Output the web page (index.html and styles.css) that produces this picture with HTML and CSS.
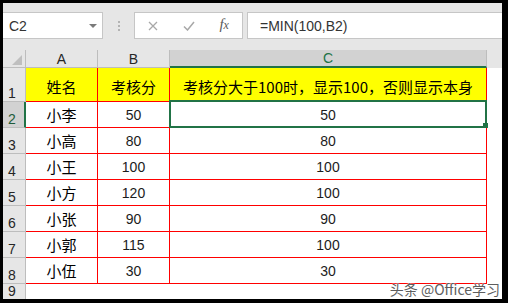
FILE: index.html
```html
<!DOCTYPE html>
<html lang="zh">
<head>
<meta charset="utf-8">
<link rel="stylesheet" href="styles.css">
</head>
<body>
<div class="frame">
  <div class="toolbar">
    <div class="namebox"><span>C2</span><span class="caret"></span></div>
    <div class="dots"><span></span><span></span><span></span></div>
    <div class="fxbox">
      <div class="ico"><svg width="10" height="10" viewBox="0 0 10 10"><path d="M1 1 L9 9 M9 1 L1 9" stroke="#a8a8a8" stroke-width="1.3" fill="none"/></svg></div>
      <div class="ico"><svg width="12" height="10" viewBox="0 0 12 10"><path d="M1 5.5 L4.5 9 L11 1" stroke="#a8a8a8" stroke-width="1.5" fill="none"/></svg></div>
      <div class="ico fx">f<span>x</span></div>
    </div>
    <div class="formula">=MIN(100,B2)</div>
  </div>
  <div class="sheet">
    <div class="corner"><span class="tri"></span></div>
    <div class="ch">A</div>
    <div class="ch">B</div>
    <div class="ch sel">C</div>
    <div class="ch blank"></div>

    <div class="rh">1</div>
    <div class="c y cjk">姓名</div>
    <div class="c y cjk">考核分</div>
    <div class="c y cjk">考核分大于100时，显示100，否则显示本身</div>
    <div class="e"></div>

    <div class="rh sel">2</div>
    <div class="c cjk">小李</div>
    <div class="c num">50</div>
    <div class="c num active">50<span class="box"></span><span class="handle"></span></div>
    <div class="e"></div>

    <div class="rh">3</div>
    <div class="c cjk">小高</div>
    <div class="c num">80</div>
    <div class="c num">80</div>
    <div class="e"></div>

    <div class="rh">4</div>
    <div class="c cjk">小王</div>
    <div class="c num">100</div>
    <div class="c num">100</div>
    <div class="e"></div>

    <div class="rh">5</div>
    <div class="c cjk">小方</div>
    <div class="c num">120</div>
    <div class="c num">100</div>
    <div class="e"></div>

    <div class="rh">6</div>
    <div class="c cjk">小张</div>
    <div class="c num">90</div>
    <div class="c num">90</div>
    <div class="e"></div>

    <div class="rh">7</div>
    <div class="c cjk">小郭</div>
    <div class="c num">115</div>
    <div class="c num">100</div>
    <div class="e"></div>

    <div class="rh">8</div>
    <div class="c cjk">小伍</div>
    <div class="c num">30</div>
    <div class="c num">30</div>
    <div class="e"></div>

    <div class="rh last">9</div>
    <div class="e wide"></div>
  </div>
  <div class="watermark">头条 @Office学习</div>
</div>
</body>
</html>
```

FILE: styles.css
```css
* { box-sizing: border-box; margin: 0; padding: 0; }
html, body { width: 508px; height: 303px; overflow: hidden; }
body { background: #000; }

.frame {
  position: relative;
  margin: 3px 6px 4px 3px;
  width: 499px;
  height: 296px;
  background: #fff;
  display: flex;
  flex-direction: column;
  font-family: "Liberation Sans", "Noto Sans CJK SC", sans-serif;
}

.toolbar {
  height: 47px;
  flex: none;
  background: #e6e6e6;
  display: flex;
  align-items: flex-start;
  padding-top: 9px;
}

.namebox {
  width: 100px;
  height: 27px;
  background: #fff;
  border: 1px solid #c6c6c6;
  border-left: none;
  display: flex;
  align-items: center;
  padding-left: 6px;
  font-size: 14px;
  color: #333;
}
.namebox .caret {
  margin-left: auto;
  margin-right: 5px;
  width: 0;
  height: 0;
  border-left: 4px solid transparent;
  border-right: 4px solid transparent;
  border-top: 4px solid #7a7a7a;
}

.dots {
  width: 31px;
  padding-top: 9px;
  display: flex;
  flex-direction: column;
  align-items: center;
  gap: 2px;
}
.dots span {
  width: 2px;
  height: 2px;
  background: #b3b3b3;
}

.fxbox {
  width: 109px;
  height: 27px;
  background: #fff;
  border: 1px solid #c6c6c6;
  display: flex;
}
.ico {
  width: 36px;
  display: flex;
  align-items: center;
  justify-content: center;
}
.ico.fx {
  font-family: "Liberation Serif", serif;
  font-style: italic;
  font-size: 15px;
  color: #5a5a5a;
  padding-bottom: 2px;
}
.ico.fx span {
  font-size: 12px;
  position: relative;
  top: 1px;
}

.formula {
  flex: 1;
  margin-left: 4px;
  height: 27px;
  background: #fff;
  border: 1px solid #c6c6c6;
  border-right: none;
  display: flex;
  align-items: center;
  padding-left: 12px;
  font-size: 14px;
  color: #333;
}

.sheet {
  display: grid;
  grid-template-columns: 23px 72px 72px 317px 15px;
  grid-template-rows: 18px 34px repeat(7, 26px) 15px;
}

.corner {
  background: #e6e6e6;
  border-right: 1px solid #bdbdbd;
  border-bottom: 1px solid #bdbdbd;
  position: relative;
}
.corner .tri {
  position: absolute;
  right: 3px;
  bottom: 2px;
  width: 0;
  height: 0;
  border-left: 10px solid transparent;
  border-bottom: 10px solid #bfbfbf;
}

.ch {
  background: #e6e6e6;
  border-right: 1px solid #bdbdbd;
  border-bottom: 1px solid #bdbdbd;
  display: flex;
  align-items: center;
  justify-content: center;
  font-size: 14px;
  color: #262626;
}
.ch.sel {
  background: #d2d2d2;
  border-bottom: 2px solid #217346;
  color: #217346;
}
.ch.blank {
  border: none;
}

.rh {
  background: #e6e6e6;
  border-right: 1px solid #bdbdbd;
  border-bottom: 1px solid #bdbdbd;
  display: flex;
  align-items: flex-end;
  padding-left: 5px;
  padding-bottom: 1px;
  font-size: 14px;
  line-height: 14px;
  color: #262626;
}
.rh.sel {
  background: #d2d2d2;
  border-right: 2px solid #217346;
  color: #1e5c3a;
}
.rh.last {
  border-bottom: none;
}

.c {
  border-right: 1px solid #ff0000;
  border-bottom: 1px solid #ff0000;
  display: flex;
  align-items: center;
  justify-content: center;
  color: #000;
}
.c.y {
  background: #ffff00;
  padding-top: 3px;
}
.cjk {
  font-family: "Noto Sans CJK SC", sans-serif;
  font-size: 15px;
}
.num {
  font-size: 14px;
  color: #1c1c1c;
}

.active { position: relative; }
.active .box {
  position: absolute;
  top: -2px;
  left: -1px;
  right: -1px;
  bottom: -1px;
  border: 2px solid #217346;
}
.active .handle {
  position: absolute;
  right: -2px;
  bottom: -1px;
  width: 5px;
  height: 5px;
  background: #217346;
}

.e { background: #fff; }
.e.wide { grid-column: span 4; }

.watermark {
  position: absolute;
  right: 2px;
  bottom: 1px;
  font-family: "Noto Sans CJK SC", sans-serif;
  font-size: 14px;
  line-height: 17px;
  color: #5e5e5e;
  text-shadow: 0 0 2px #fff, 0 0 1px #fff;
}
```
